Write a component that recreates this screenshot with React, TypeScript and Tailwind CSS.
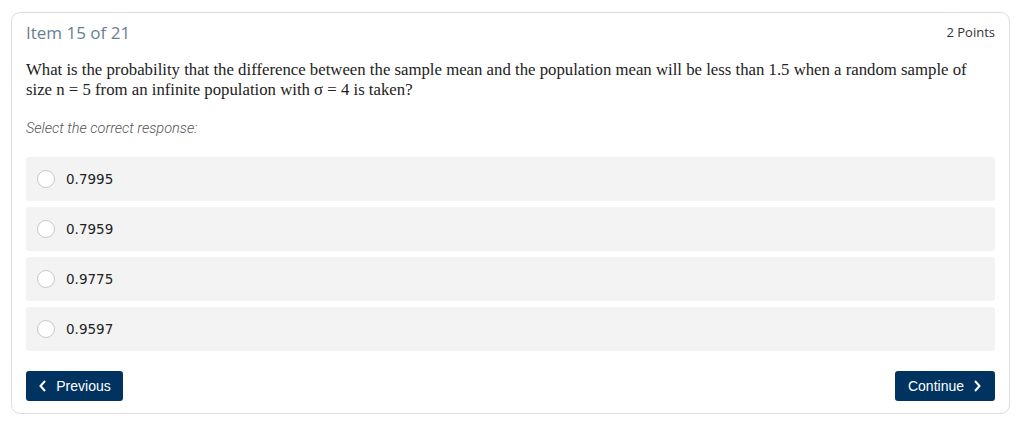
import React from "react";

const options = ["0.7995", "0.7959", "0.9775", "0.9597"];

export default function App() {
  return (
    <div className="w-[1022px] h-[436px] bg-white pt-[12px] pl-[11px]">
      <div className="w-[999px] h-[402px] rounded-[9px] border border-[#dedede] px-[14px] pt-[7px] pb-[11px] flex flex-col">
        <div className="flex items-center justify-between h-[26px]">
          <span className="text-[17px] text-[#6a7e93]" style={{ fontFamily: '"Open Sans", sans-serif' }}>
            Item 15 of 21
          </span>
          <span className="text-[13px] text-[#333]" style={{ fontFamily: '"Open Sans", sans-serif' }}>
            2 Points
          </span>
        </div>
        <p
          className="mt-[14px] pr-[10px] text-[16.75px] leading-[20px] text-[#222]"
          style={{ fontFamily: '"Liberation Serif", serif' }}
        >
          What is the probability that the difference between the sample mean and the population mean will be less than 1.5 when a random sample of size n = 5 from an infinite population with σ = 4 is taken?
        </p>
        <p
          className="mt-[20px] text-[14.5px] leading-[18px] italic font-light text-[#555]"
          style={{ fontFamily: 'Roboto, sans-serif' }}
        >
          Select the correct response:
        </p>
        <div className="mt-[19px] flex flex-col gap-[6px]">
          {options.map((o) => (
            <div key={o} className="h-[44px] bg-[#f3f3f3] rounded-[3px] flex items-center pl-[11px]">
              <span className="w-[18px] h-[18px] rounded-full border border-[#c8c8c8] bg-white" />
              <span
                className="ml-[11px] text-[#222]"
                style={{ fontFamily: '"DejaVu Sans", sans-serif', fontSize: 13.5 }}
              >
                {o}
              </span>
            </div>
          ))}
        </div>
        <div className="mt-[20px] flex justify-between">
          <button
            className="h-[30px] w-[97px] rounded-[3px] bg-[#00335f] text-white text-[14px] flex items-center justify-center gap-[8px]"
            style={{ fontFamily: '"Liberation Sans", Arial, sans-serif' }}
          >
            <svg width="10" height="14" viewBox="0 0 10 14" fill="none" stroke="white" strokeWidth="2">
              <path d="M7 2 L2.5 7 L7 12" />
            </svg>
            Previous
          </button>
          <button
            className="h-[30px] w-[100px] rounded-[3px] bg-[#00335f] text-white text-[14px] flex items-center justify-center gap-[8px]"
            style={{ fontFamily: '"Liberation Sans", Arial, sans-serif' }}
          >
            Continue
            <svg width="10" height="14" viewBox="0 0 10 14" fill="none" stroke="white" strokeWidth="2">
              <path d="M3 2 L7.5 7 L3 12" />
            </svg>
          </button>
        </div>
      </div>
    </div>
  );
}
